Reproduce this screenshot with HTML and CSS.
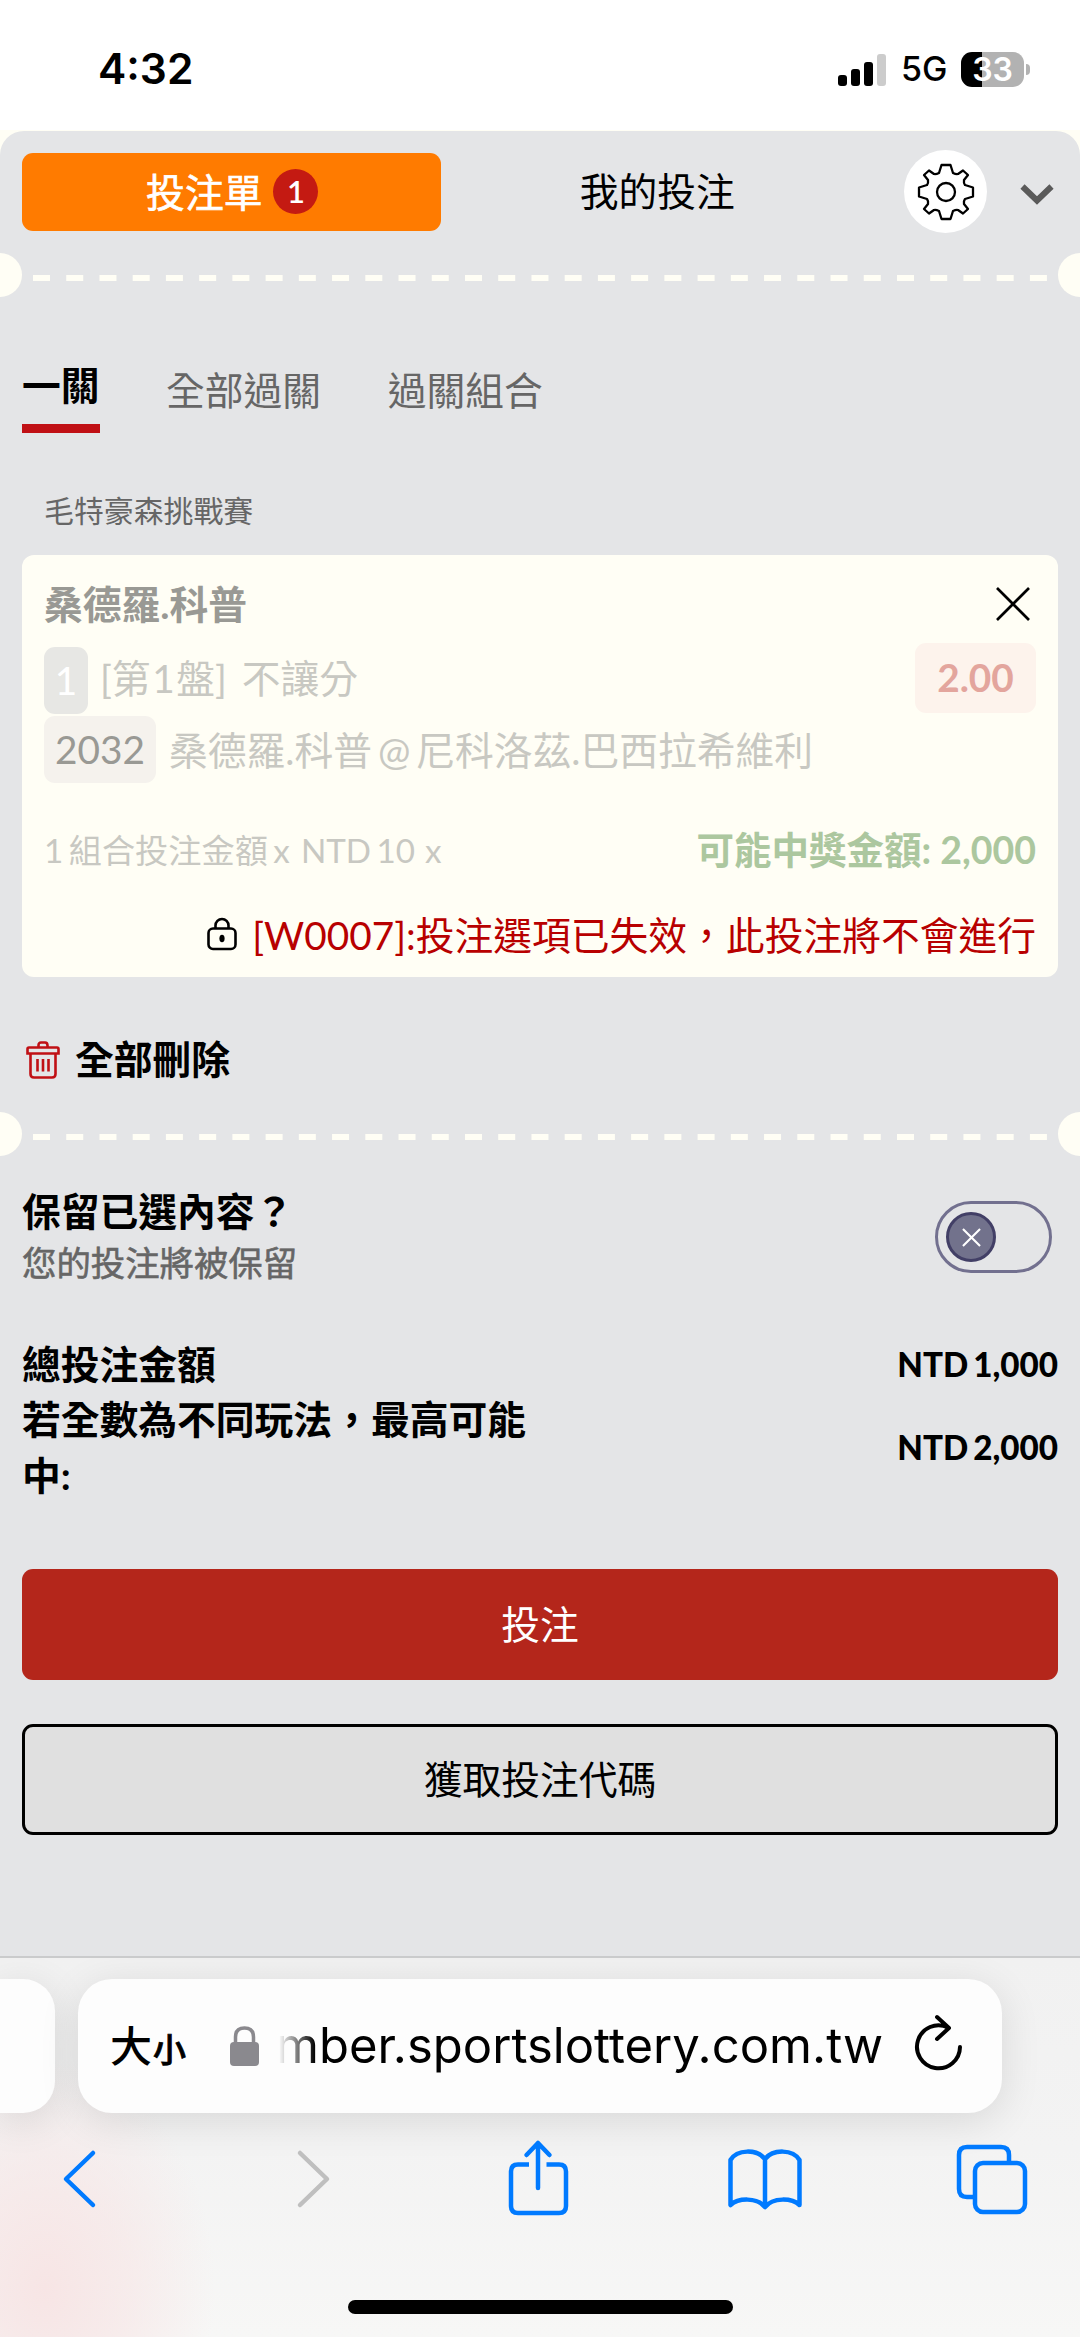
FILE: index.html
```html
<!DOCTYPE html>
<html lang="zh-Hant">
<head>
<meta charset="utf-8">
<title>投注單</title>
<link rel="stylesheet" href="styles.css">
</head>
<body>
<header class="status">
  <span class="clock">4:32</span>
  <div class="status-right">
    <svg class="signal" viewBox="0 0 48 32"><rect x="0" y="21" width="9" height="11" rx="3"/><rect x="13" y="15" width="9" height="17" rx="3"/><rect x="26" y="8" width="9" height="24" rx="3"/><rect x="39" y="0" width="9" height="32" rx="3" fill="#ccc"/></svg>
    <span class="network">5G</span>
    <span class="battery">33</span>
    <span class="battery-tip"></span>
  </div>
</header>
<div class="sheet-back">
<main class="sheet">
  <nav class="top">
    <button class="slip">投注單<span class="count">1</span></button>
    <button class="mine">我的投注</button>
    <span class="gear"><svg viewBox="-28 -28 56 56"><path d="M-4.5-27H4.5L7-19Q10-17.5 12-18L17-21.500L22-17L18-12Q17.500-9 19-7L27-4.500V4.500L19 7Q17.500 9 18 12L22 17L17 21.500L12 18Q10 17.500 7 19L4.500 27H-4.500L-7 19Q-10 17.500-12 18L-17 21.500L-22 17L-18 12Q-17.500 9-19 7L-27 4.500V-4.500L-19-7Q-17.500-9-18-12L-22-17L-17-21.500L-12-18Q-10-17.500-7-19Z"/><circle r="9"/></svg></span>
    <svg class="chevron" viewBox="0 0 34 20"><path d="M2.500 2.500 17 16.500 31.500 2.500"/></svg>
  </nav>
  <div class="tear"><i class="notch"></i><svg class="dashes" viewBox="0 0 1014 6"><path d="M0 3H1014"/></svg><i class="notch end"></i></div>
  <nav class="tabs"><span class="tab active">一關</span><span class="tab">全部過關</span><span class="tab">過關組合</span></nav>
  <p class="league">毛特豪森挑戰賽</p>
  <section class="card">
    <div class="row title-row"><span class="title">桑德羅.科普</span><svg class="close" viewBox="0 0 34 34"><path d="M1 1 33 33M33 1 1 33"/></svg></div>
    <div class="row market"><span class="chip one">1</span><span class="faint set">[第<span class="set-no">1</span>盤] 不讓分</span><span class="odds">2.00</span></div>
    <div class="row match"><span class="chip code">2032</span><span class="faint players">桑德羅.科普 @ 尼科洛茲.巴西拉希維利</span></div>
    <div class="row stake"><span class="formula">1 組合投注金額 x</span><span class="formula unit">NTD 10</span><span class="formula times">x</span><span class="win">可能中獎金額: 2,000</span></div>
    <div class="row error"><svg class="padlock" viewBox="0 0 30 34"><rect x="1.500" y="11.500" width="27" height="20.500" rx="4.500"/><path d="M8.500 11V8.500a6.500 6.500 0 0 1 13 0V11"/><ellipse cx="15" cy="21.500" rx="2.600" ry="3.800"/></svg><span>[W0007]:投注選項已失效，此投注將不會進行</span></div>
  </section>
  <div class="delete"><svg class="trash" viewBox="0 0 34 38"><path d="M3 6.500H31Q32.500 6.500 32.500 8V12.500H1.500V8Q1.500 6.500 3 6.500ZM4.500 13V33Q4.500 36.500 8 36.500H26Q29.500 36.500 29.500 33V13M12.500 6V4.500Q12.500 1.500 15 1.500H19Q21.500 1.500 21.500 4.500V6M11.500 18V30.500M17 18V30.500M22.500 18V30.500"/></svg><span>全部刪除</span></div>
  <div class="tear"><i class="notch"></i><svg class="dashes" viewBox="0 0 1014 6"><path d="M0 3H1014"/></svg><i class="notch end"></i></div>
  <div class="keep">
    <div><p class="keep-title">保留已選內容？</p><p class="keep-note">您的投注將被保留</p></div>
    <span class="toggle"><span class="knob"><svg viewBox="0 0 20 20"><path d="M1 1 19 19M19 1 1 19"/></svg></span></span>
  </div>
  <div class="totals">
    <div class="total"><span class="label">總投注金額</span><b>NTD 1,000</b></div>
    <div class="total"><span class="label">若全數為不同玩法，最高可能中:</span><b>NTD 2,000</b></div>
  </div>
  <button class="action bet">投注</button>
  <button class="action get-code">獲取投注代碼</button>
</main>
</div>
<footer class="browser">
  <div class="address-row">
    <span class="prev-tab"></span>
    <div class="address">
      <span class="size"><span>大</span><small>小</small></span>
      <svg class="secure" viewBox="0 0 30 40"><rect x="0" y="16" width="29" height="24" rx="4"/><path d="M5.500 17V11Q5.500 2 14.500 2T23.500 11V17"/></svg>
      <span class="url">mber.sportslottery.com.tw</span>
      <svg class="reload" viewBox="0 0 48 56"><path d="M33 12.500A21.500 21.500 0 1 0 45 32M22 2 34 13 22 24"/></svg>
    </div>
  </div>
  <div class="tools">
    <svg class="back" viewBox="0 0 34 58"><path d="M31 3 4 29 31 55"/></svg>
    <svg class="forward" viewBox="0 0 34 58"><path d="M3 3 30 29 3 55"/></svg>
    <svg class="share" viewBox="0 0 60 76"><path d="M21 24.500H10Q3 24.500 3 31.500V66Q3 73 10 73H51Q58 73 58 66V31.500Q58 24.500 51 24.500H38.500" stroke-linecap="butt"/><path d="M30 48V3M18.500 15 30 3 41.500 15"/></svg>
    <svg class="book" viewBox="0 0 74 62"><path d="M2.500 12C9 1 29 1 37 11C45 1 65 1 71.500 12V57C64 50 45 49 37 59C29 49 10 50 2.500 57ZM37 11V59"/></svg>
    <svg class="pages" viewBox="0 0 70 70"><path d="M17 52H10Q2 52 2 44V10Q2 2 10 2H44Q52 2 52 10V18" stroke-linecap="butt"/><rect x="18" y="18" width="50" height="49" rx="8"/></svg>
  </div>
  <span class="home"></span>
</footer>
</body>
</html>
```
FILE: styles.css
```css
* { box-sizing: border-box; }
body {
  margin: 0;
  width: 1080px;
  height: 2337px;
  overflow: hidden;
  background: #fff;
  color: #000;
  font: 38.77px/56px Lato, "Noto Sans CJK TC", sans-serif;
}
p { margin: 0; }
button { border: 0; padding: 0; font: inherit; color: inherit; background: none; }
svg { display: block; fill: none; stroke: currentColor; overflow: visible; flex: none; }

.status { height: 130px; padding: 43px 50px 0 98px; display: flex; justify-content: space-between; font-family: Inter, sans-serif; }
.clock { font-size: 42.5px; font-weight: 600; line-height: 52px; }
.status-right { display: flex; height: 52px; align-items: center; }
.signal { width: 48px; height: 32px; fill: #000; stroke: none; margin-top: 1px; }
.network { font-size: 34px; font-weight: 500; margin-left: 15px; width: 46px; }
.battery { margin-left: 14px; width: 63px; height: 35px; border-radius: 11px; background: linear-gradient(90deg, #000 0 33%, #b2b2b2 33%); color: #fff; font-size: 32px; font-weight: 600; line-height: 35px; text-align: center; }
.battery-tip { width: 4px; height: 11px; margin-left: 2px; border-radius: 0 5px 5px 0; background: #b2b2b2; }

.sheet-back { background: #fffef5; padding-top: 1px; }
.sheet { height: 1825px; background: #e4e5e7; border-radius: 24px 24px 0 0; overflow: hidden; }
.top { height: 122px; display: flex; align-items: flex-start; padding: 19px 26px 0 22px; }
.slip { width: 419px; height: 78px; margin-top: 3px; padding: 0 0 1px 2px; border-radius: 11px; background: #ff7b00; color: #fff; -webkit-text-stroke: .7px; display: flex; align-items: center; justify-content: center; }
.count { width: 45px; height: 45px; margin-left: 11px; border-radius: 50%; background: #c41a12; font-size: 31px; line-height: 44px; font-weight: 600; -webkit-text-stroke: 0; }
.mine { width: 433px; height: 78px; margin-top: 3px; padding: 0 0 2px 1px; }
.gear { width: 83px; height: 83px; margin-left: 31px; border-radius: 50%; background: #fff; display: grid; place-items: center; }
.gear svg { width: 56px; height: 56px; stroke-width: 2.300; stroke-linejoin: round; }
.chevron { width: 34px; height: 20px; margin: 34px 0 0 33px; color: #5a5a5a; stroke-width: 6; }

.tear { height: 44px; display: flex; justify-content: space-between; }
.notch { width: 22px; height: 44px; background: #fffef5; border-radius: 0 22px 22px 0; }
.notch.end { border-radius: 22px 0 0 22px; }
.dashes { width: 1014px; height: 6px; margin-top: 22px; stroke: #fffef5; stroke-width: 6; stroke-dasharray: 17 16.230; }

.tabs { display: flex; gap: 66.5px; padding: 59px 22px 0; height: 136px; color: #666; }
.tab { padding-top: 6px; height: 77px; }
.tab.active { padding-top: 1px; font-weight: 700; color: #000; border-bottom: 9px solid #c01015; }
.league { height: 122px; padding: 49px 44px 0; font-size: 29.9px; color: #666; }

.card { margin: 0 22px; height: 422px; padding: 21px 22px 0; border-radius: 12px; background: #fffef5; }
.row { display: flex; align-items: center; }
.title-row { height: 56px; justify-content: space-between; padding-right: 6px; }
.title { color: #999994; font-weight: 700; }
.close { width: 34px; height: 34px; stroke-width: 2.700; }
.market { height: 80px; margin-top: 6px; }
.match { height: 67px; margin-top: -2px; }
.chip { height: 67px; line-height: 67px; border-radius: 11px; text-align: center; }
.one { width: 44px; background: #e7e7e4; color: #fff; margin: 5px 12px 0 0; }
.code { width: 112px; background: #f5f2ed; color: #999994; margin-right: 13px; }
.faint, .formula { color: #c8c8c2; }
.set { word-spacing: 5px; }
.set-no { padding: 0 1.5px; }
.players { word-spacing: -4px; }
.odds { width: 121px; height: 70px; line-height: 69px; margin-left: auto; border-radius: 11px; background: #fdf3ec; color: #e3a59d; font-weight: 700; text-align: center; }
.stake { height: 66px; margin-top: 34px; }
.formula { font-size: 33.2px; word-spacing: -3px; }
.unit { margin-left: 11px; }
.times { margin-left: 10px; }
.win { margin-left: auto; color: #acc79f; font-size: 37.5px; font-weight: 700; }
.error { height: 66px; margin-top: 19px; justify-content: flex-end; color: #b80000; }
.padlock { width: 30px; height: 34px; margin: -3px 15px 0 0; color: #000; stroke-width: 2.600; }
.padlock ellipse { fill: #000; stroke: none; }

.delete { height: 135px; padding: 55px 26px 0; display: flex; font-weight: 700; }
.delete span { margin-top: -1px; }
.trash { width: 34px; height: 38px; margin: 9px 15px 0 0; color: #c01015; stroke-width: 2.600; }

.keep { display: flex; justify-content: space-between; padding: 27px 28px 0 22px; height: 181px; }
.keep-title { font-weight: 700; }
.keep-note { font-size: 34.4px; line-height: 48px; color: #666; -webkit-text-stroke: .6px; }
.toggle { width: 117px; height: 72px; margin-top: 18px; border: 3px solid #72708f; border-radius: 36px; padding: 8px; }
.knob { width: 50px; height: 50px; border-radius: 50%; background: #72728c; border: 3px solid #423f66; display: grid; place-items: center; color: #fff; }
.knob svg { width: 19px; height: 19px; stroke-width: 2.200; }

.totals { padding: 0 22px; height: 232px; }
.total { display: flex; align-items: center; justify-content: space-between; font-weight: 700; line-height: 55.400px; }
.label { width: 518px; }
.total b { font-size: 33.2px; word-spacing: -3px; margin-top: -1px; }
.action { display: block; width: 1036px; height: 111px; margin: 0 22px; padding-bottom: 2px; border-radius: 11px; }
.bet { background: #b4261b; color: #fff; }
.get-code { margin-top: 44px; border: 3px solid #000; background: #e0e0e0; }

.browser { height: 381px; border-top: 2px solid #cacbcc; background: radial-gradient(ellipse 170px 230px at 45px 330px, #f7e5e5, #f7e5e599 50%, #f7e5e500), linear-gradient(#f1f1f1, #f3f3f3 50%, #f7f7f6); overflow: hidden; }
.address-row { display: flex; gap: 23px; padding-top: 21px; }
.prev-tab { width: 55px; height: 134px; border-radius: 0 32px 32px 0; background: #fdfdfd; box-shadow: 0 8px 40px #0000001c; }
.address { width: 924px; height: 134px; border-radius: 34px; background: #fdfdfd; box-shadow: 0 8px 40px #0000001c; display: flex; align-items: center; padding-left: 32px; }
.size { width: 77px; white-space: nowrap; font: 500 42px/56px "Noto Sans CJK TC", sans-serif; display: flex; align-items: baseline; }
.size small { font-size: 33px; margin-left: 1px; -webkit-text-stroke: .8px; }
.secure { width: 30px; height: 40px; margin-left: 43px; stroke: #8a898e; fill: #8a898e; stroke-width: 0; }
.secure path { fill: none; stroke-width: 3.500; }
.url { width: 604px; margin-left: 19px; display: flex; justify-content: flex-end; overflow: hidden; font: 49px/60px Inter, sans-serif; -webkit-mask: linear-gradient(90deg, #0000, #000 36px); }
.reload { width: 48px; height: 56px; margin: -6px 0 0 32px; stroke-width: 4; stroke-linecap: round; stroke-linejoin: round; }
.tools { height: 188px; padding: 27px 53px 0 62px; display: flex; align-items: flex-start; color: #007aff; }
.tools svg { stroke-width: 4.500; stroke-linecap: round; stroke-linejoin: round; }
.back, .forward { width: 34px; height: 58px; margin-top: 10px; }
.forward { color: #bfbfbf; margin-left: 201px; }
.share { width: 60px; height: 76px; margin-left: 177px; }
.book { width: 74px; height: 62px; margin: 8px 0 0 160px; }
.pages { width: 70px; height: 70px; margin: 5px 0 0 155px; }
.home { display: block; width: 385px; height: 14px; margin: -1px auto 0; border-radius: 7px; background: #000; }
```
